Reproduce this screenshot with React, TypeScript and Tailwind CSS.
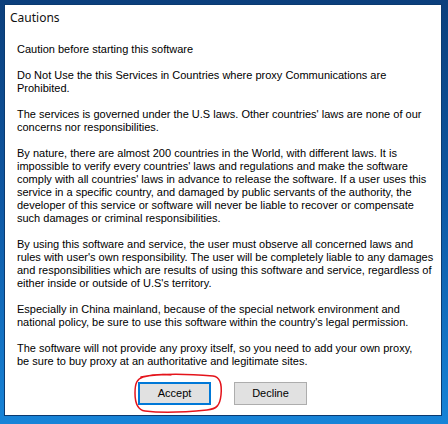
import React from 'react'

const paragraphs: string[][] = [
  ['Do Not Use the this Services in Countries where proxy Communications are', 'Prohibited.'],
  ["The services is governed under the U.S laws. Other countries' laws are none of our", 'concerns nor responsibilities.'],
  [
    'By nature, there are almost 200 countries in the World, with different laws. It is',
    "impossible to verify every countries' laws and regulations and make the software",
    "comply with all countries' laws in advance to release the software. If a user uses this",
    'service in a specific country, and damaged by public servants of the authority, the',
    'developer of this service or software will never be liable to recover or compensate',
    'such damages or criminal responsibilities.',
  ],
  [
    'By using this software and service, the user must observe all concerned laws and',
    "rules with user's own responsibility. The user will be completely liable to any damages",
    'and responsibilities which are results of using this software and service, regardless of',
    "either inside or outside of U.S's territory.",
  ],
  [
    'Especially in China mainland, because of the special network environment and',
    "national policy, be sure to use this software within the country's legal permission.",
  ],
  [
    'The software will not provide any proxy itself, so you need to add your own proxy,',
    'be sure to buy proxy at an authoritative and legitimate sites.',
  ],
]

export default function App() {
  return (
    <div className="w-[448px] h-[424px] overflow-hidden bg-gradient-to-b from-[#0b3f7c] via-[#0f5aa6] to-[#1784d8] pl-[4px] pt-[4px]">
      <div className="relative w-[438px] h-[412px] border border-[#0a3a70] bg-white flex flex-col">
        <div className="h-[26px] pl-[5px] pt-[5px] text-[12px] text-[#111] font-['Noto_Sans',sans-serif] leading-[16px]">
          Cautions
        </div>
        <div className="pl-[12px] pt-[12px] font-['Liberation_Sans',sans-serif] text-[11px] leading-[13px] text-black whitespace-nowrap flex flex-col gap-[13px]">
          <div>Caution before starting this software</div>
          {paragraphs.map((p, i) => (
            <div key={i}>
              {p.map((line, j) => (
                <div key={j}>{line}</div>
              ))}
            </div>
          ))}
        </div>
        <div className="flex gap-[23px] pl-[133px] pt-[14px]">
          <button className="w-[73px] h-[23px] bg-[#e1e1e1] border-2 border-[#0078d7] text-[11px] font-['Liberation_Sans',sans-serif] text-black">
            Accept
          </button>
          <button className="w-[73px] h-[23px] bg-[#e1e1e1] border border-[#adadad] text-[11px] font-['Liberation_Sans',sans-serif] text-black">
            Decline
          </button>
        </div>
        <svg className="absolute left-[126px] top-[366px]" width="94" height="44" viewBox="0 0 94 44" fill="none">
          <path
            d="M10 6 C 30 2, 60 3, 82 5 C 90 6, 91 14, 90 24 C 89 34, 86 38, 76 39 C 56 41, 30 42, 14 40 C 6 39, 4 32, 4 22 C 4 12, 6 8, 12 6 C 20 4, 30 3, 40 4"
            stroke="#e4141b"
            strokeWidth="1.5"
            strokeLinecap="round"
          />
        </svg>
      </div>
    </div>
  )
}
